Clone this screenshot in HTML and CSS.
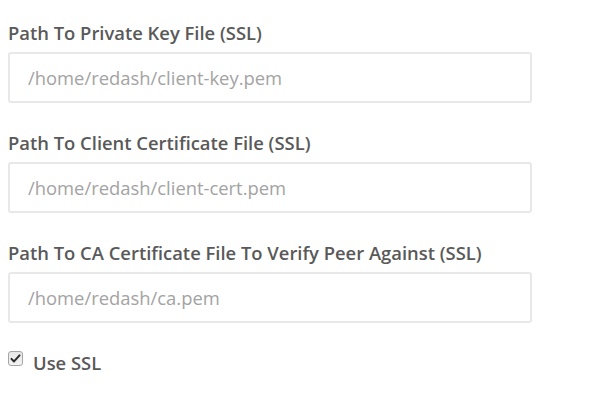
FILE: index.html
```html
<!DOCTYPE html>
<html>
<head>
<meta charset="utf-8">
<link rel="stylesheet" href="styles.css">
</head>
<body>
<form class="form">
  <div class="group">
    <label class="label">Path To Private Key File (SSL)</label>
    <input class="input" type="text" placeholder="/home/redash/client-key.pem">
  </div>
  <div class="group">
    <label class="label">Path To Client Certificate File (SSL)</label>
    <input class="input" type="text" placeholder="/home/redash/client-cert.pem">
  </div>
  <div class="group">
    <label class="label">Path To CA Certificate File To Verify Peer Against (SSL)</label>
    <input class="input" type="text" placeholder="/home/redash/ca.pem">
  </div>
  <label class="check">
    <span class="checkbox">
      <svg class="tick" viewBox="0 0 12 12" width="11" height="11"><path d="M1.6 6.4 L4.4 9.2 L10.4 2.6" fill="none" stroke="#2b2b2b" stroke-width="2.2" stroke-linecap="round" stroke-linejoin="round"/></svg>
    </span>
    <span class="check-text">Use SSL</span>
  </label>
</form>
</body>
</html>
```

FILE: styles.css
```css
html, body {
  margin: 0;
  padding: 0;
  background: #ffffff;
}
body {
  padding: 8px;
  font-family: "Open Sans", "Noto Sans", sans-serif;
  color: #595959;
}
.form {
  display: flex;
  flex-direction: column;
  width: 524px;
}
.group {
  display: flex;
  flex-direction: column;
  margin-bottom: 15px;
}
.label {
  font-size: 18.4px;
  font-weight: 600;
  line-height: 22px;
  padding-top: 14px;
  margin-bottom: 8px;
  color: #595959;
  white-space: nowrap;
}
.input {
  box-sizing: border-box;
  height: 51px;
  width: 524px;
  border: 2px solid #e8e8e8;
  border-radius: 3px;
  padding: 0 18px;
  font-family: inherit;
  font-size: 18.4px;
  color: #595959;
  background: #fff;
  outline: none;
}
.input::placeholder {
  color: #a3a3a3;
}
.check {
  display: flex;
  align-items: flex-start;
  gap: 10px;
  margin-top: 11px;
}
.checkbox {
  box-sizing: border-box;
  width: 15px;
  height: 15px;
  margin-top: 2px;
  border: 1px solid #a6a6a6;
  border-radius: 3px;
  background: linear-gradient(#e6e6e6, #f4f4f4);
  display: flex;
  align-items: center;
  justify-content: center;
}
.tick {
  display: block;
}
.check-text {
  font-size: 18.4px;
  font-weight: 600;
  color: #595959;
  line-height: 22px;
  padding-top: 3px;
}
```
